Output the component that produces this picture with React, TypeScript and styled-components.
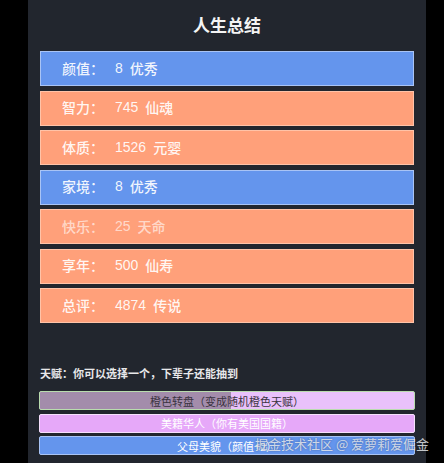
import React from "react";
import styled, { createGlobalStyle } from "styled-components";

const Global = createGlobalStyle`
  html, body { margin: 0; padding: 0; background: #000; }
  body { font-family: "Liberation Sans", "Noto Sans CJK SC", sans-serif; }
`;

const Page = styled.div`
  position: relative;
  width: 444px;
  height: 463px;
  overflow: hidden;
  background: #000;
`;

const Panel = styled.div`
  margin-left: 28px;
  width: 398px;
  height: 463px;
  box-sizing: border-box;
  background: #22262e;
  padding: 0 12px;
  display: flex;
  flex-direction: column;
`;

const Title = styled.h1`
  margin: 0;
  height: 51px;
  display: flex;
  align-items: center;
  justify-content: center;
  padding-bottom: 3px;
  box-sizing: border-box;
  font-family: "Noto Sans CJK SC", sans-serif;
  font-size: 17px;
  font-weight: 700;
  color: #f4f4f4;
`;

const Rows = styled.div`
  display: flex;
  flex-direction: column;
  gap: 4.5px;
`;

const Row = styled.div<{ $tone: "blue" | "orange"; $fade?: number }>`
  height: 35px;
  box-sizing: border-box;
  display: flex;
  align-items: center;
  padding-left: 21px;
  padding-bottom: 2px;
  background: ${(p) => (p.$tone === "blue" ? "#6495ed" : "#ffa07a")};
  border: 1px solid ${(p) => (p.$tone === "blue" ? "#a9c4f5" : "#ffc3a8")};
  color: rgba(255, 255, 255, ${(p) => p.$fade ?? 0.92});
  font-family: "Liberation Sans", "Noto Sans CJK SC", sans-serif;
  font-size: 14px;
  font-weight: 500;
`;

const Label = styled.span`
  width: 53px;
`;

const Grade = styled.span`
  margin-left: 7px;
`;

const TalentHead = styled.div`
  margin-top: 42px;
  font-family: "Noto Sans CJK SC", sans-serif;
  font-size: 11px;
  font-weight: 700;
  color: #e8e8ea;
  line-height: 16px;
`;

const Talents = styled.div`
  margin-top: 10px;
  margin-left: -1px;
  margin-right: -1px;
  display: flex;
  flex-direction: column;
  gap: 3.5px;
`;

const palette = {
  orange: { bg: "#e9c1fb", border: "#b9dcae", fg: "#3a3340" },
  violet: { bg: "#e6a8f9", border: "#f6e0fd", fg: "#ffffff" },
  blue: { bg: "#6495ed", border: "#a9c4f5", fg: "#ffffff" },
};

const Talent = styled.div<{ $kind: keyof typeof palette }>`
  position: relative;
  height: 19px;
  box-sizing: border-box;
  display: flex;
  align-items: center;
  justify-content: center;
  background: ${(p) => palette[p.$kind].bg};
  border: 1px solid ${(p) => palette[p.$kind].border};
  border-radius: 2px;
  color: ${(p) => palette[p.$kind].fg};
  font-family: "Noto Sans CJK SC", sans-serif;
  font-size: 11px;
  overflow: hidden;
`;

const Spin = styled.div`
  position: absolute;
  left: 0;
  top: 0;
  bottom: 0;
  background: #a38cab;
`;

const TalentText = styled.span`
  position: relative;
`;

const Watermark = styled.div`
  position: absolute;
  left: 255px;
  top: 434px;
  font-family: "Noto Sans CJK SC", sans-serif;
  font-size: 13px;
  color: rgba(236, 238, 242, 0.82);
  text-shadow: 0 0 2px rgba(0, 0, 0, 0.35);
  white-space: nowrap;
`;

const stats: { label: string; value: string; grade: string; tone: "blue" | "orange"; fade?: number }[] = [
  { label: "颜值：", value: "8", grade: "优秀", tone: "blue" },
  { label: "智力：", value: "745", grade: "仙魂", tone: "orange" },
  { label: "体质：", value: "1526", grade: "元婴", tone: "orange" },
  { label: "家境：", value: "8", grade: "优秀", tone: "blue" },
  { label: "快乐：", value: "25", grade: "天命", tone: "orange", fade: 0.62 },
  { label: "享年：", value: "500", grade: "仙寿", tone: "orange" },
  { label: "总评：", value: "4874", grade: "传说", tone: "orange" },
];

export default function App() {
  return (
    <Page>
      <Global />
      <Panel>
        <Title>人生总结</Title>
        <Rows>
          {stats.map((s) => (
            <Row key={s.label} $tone={s.tone} $fade={s.fade}>
              <Label>{s.label}</Label>
              <span>{s.value}</span>
              <Grade>{s.grade}</Grade>
            </Row>
          ))}
        </Rows>
        <TalentHead>天赋：你可以选择一个，下辈子还能抽到</TalentHead>
        <Talents>
          <Talent $kind="orange">
            <Spin style={{ width: "51%" }} />
            <TalentText>橙色转盘（变成随机橙色天赋）</TalentText>
          </Talent>
          <Talent $kind="violet">
            <TalentText>美籍华人（你有美国国籍）</TalentText>
          </Talent>
          <Talent $kind="blue">
            <TalentText>父母美貌（颜值+2）</TalentText>
          </Talent>
        </Talents>
      </Panel>
      <Watermark>掘金技术社区 @ 爱萝莉爱倔金</Watermark>
    </Page>
  );
}
